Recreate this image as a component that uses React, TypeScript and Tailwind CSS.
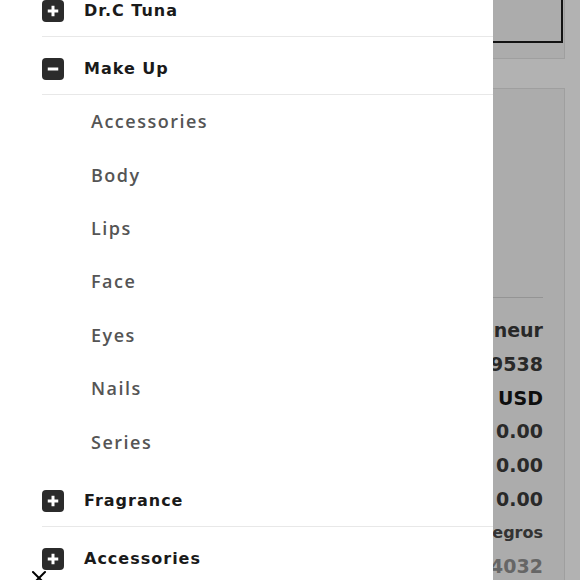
import { Plus, Minus, X } from "lucide-react";

type Category = {
  name: string;
  open?: boolean;
  children?: string[];
};

const CATEGORIES: Category[] = [
  { name: "Dr.C Tuna" },
  {
    name: "Make Up",
    open: true,
    children: ["Accessories", "Body", "Lips", "Face", "Eyes", "Nails", "Series"],
  },
  { name: "Fragrance" },
  { name: "Accessories" },
];

const VALUES = [
  { text: "Entrepreneur", className: "text-[19px] font-bold text-[#3a3a3a]" },
  { text: "5019538", className: "text-[19px] font-bold text-[#3c3c3c]" },
  { text: "USD", className: "text-[19px] font-bold text-[#151515]" },
  { text: "0.00", className: "text-[19px] font-bold text-[#3c3c3c]" },
  { text: "0.00", className: "text-[19px] font-bold text-[#3c3c3c]" },
  { text: "0.00", className: "text-[19px] font-bold text-[#3c3c3c]" },
  { text: "Negros", className: "text-[16px] font-bold text-[#494949]" },
  { text: "154032", className: "text-[19px] font-bold text-[#929292]" },
];

function ToggleIcon({ open }: { open?: boolean }) {
  return (
    <span className="flex h-[22px] w-[22px] shrink-0 items-center justify-center rounded-[4px] bg-[#2b2b2b] text-white">
      {open ? (
        <Minus size={18} strokeWidth={4} strokeLinecap="butt" />
      ) : (
        <Plus size={18} strokeWidth={4} strokeLinecap="butt" />
      )}
    </span>
  );
}

function PageBehind() {
  return (
    <div className="flex flex-col items-end pr-[15px]">
      <div className="flex h-[59px] w-[420px] justify-end border border-t-0 border-[#e4e4e4] bg-[#f7f7f7] pr-px">
        <div className="h-[43px] w-[400px] border-2 border-t-0 border-[#1c1c1c]" />
      </div>
      <div className="mt-[29px] flex h-[520px] w-[420px] flex-col border border-b-0 border-[#e4e4e4] bg-[#f7f7f7] pr-[21px]">
        <div className="h-[209px] border-b border-[#d4d4d4]" />
        <div className="flex flex-col items-end pt-[16px]">
          {VALUES.map((v, i) => (
            <div key={i} className={`flex h-[33.7px] items-center leading-none ${v.className}`}>
              {v.text}
            </div>
          ))}
        </div>
      </div>
    </div>
  );
}

function Drawer() {
  return (
    <aside className="fixed inset-y-0 left-0 w-[493px] overflow-hidden bg-white">
      <ul className="-mt-[21px] pl-[42px]">
        {CATEGORIES.map((cat) => (
          <li key={cat.name}>
            <div className="flex h-[58px] items-start gap-[20px] border-b border-[#e8e8e8] pt-[21px]">
              <ToggleIcon open={cat.open} />
              <span className="text-[16px] font-bold leading-[22px] tracking-[1px] text-[#1a1a1a]">
                {cat.name}
              </span>
            </div>
            {cat.open && cat.children && (
              <ul className="pl-[49px]">
                {cat.children.map((child) => (
                  <li
                    key={child}
                    className="flex h-[53.4px] items-center text-[18px] font-semibold tracking-[1.5px] text-[#555555]"
                    style={{ fontFamily: '"Open Sans", sans-serif' }}
                  >
                    {child}
                  </li>
                ))}
              </ul>
            )}
          </li>
        ))}
      </ul>
      <button
        type="button"
        className="absolute left-[27px] top-[566px] flex h-[24px] w-[24px] items-center justify-center text-black"
      >
        <X size={24} strokeWidth={2} />
      </button>
    </aside>
  );
}

export default function App() {
  return (
    <div
      className="relative h-[580px] w-[580px] overflow-hidden bg-white"
      style={{ fontFamily: '"DejaVu Sans", "Noto Sans", sans-serif' }}
    >
      <PageBehind />
      <div className="fixed inset-0 bg-black/30" />
      <Drawer />
    </div>
  );
}
